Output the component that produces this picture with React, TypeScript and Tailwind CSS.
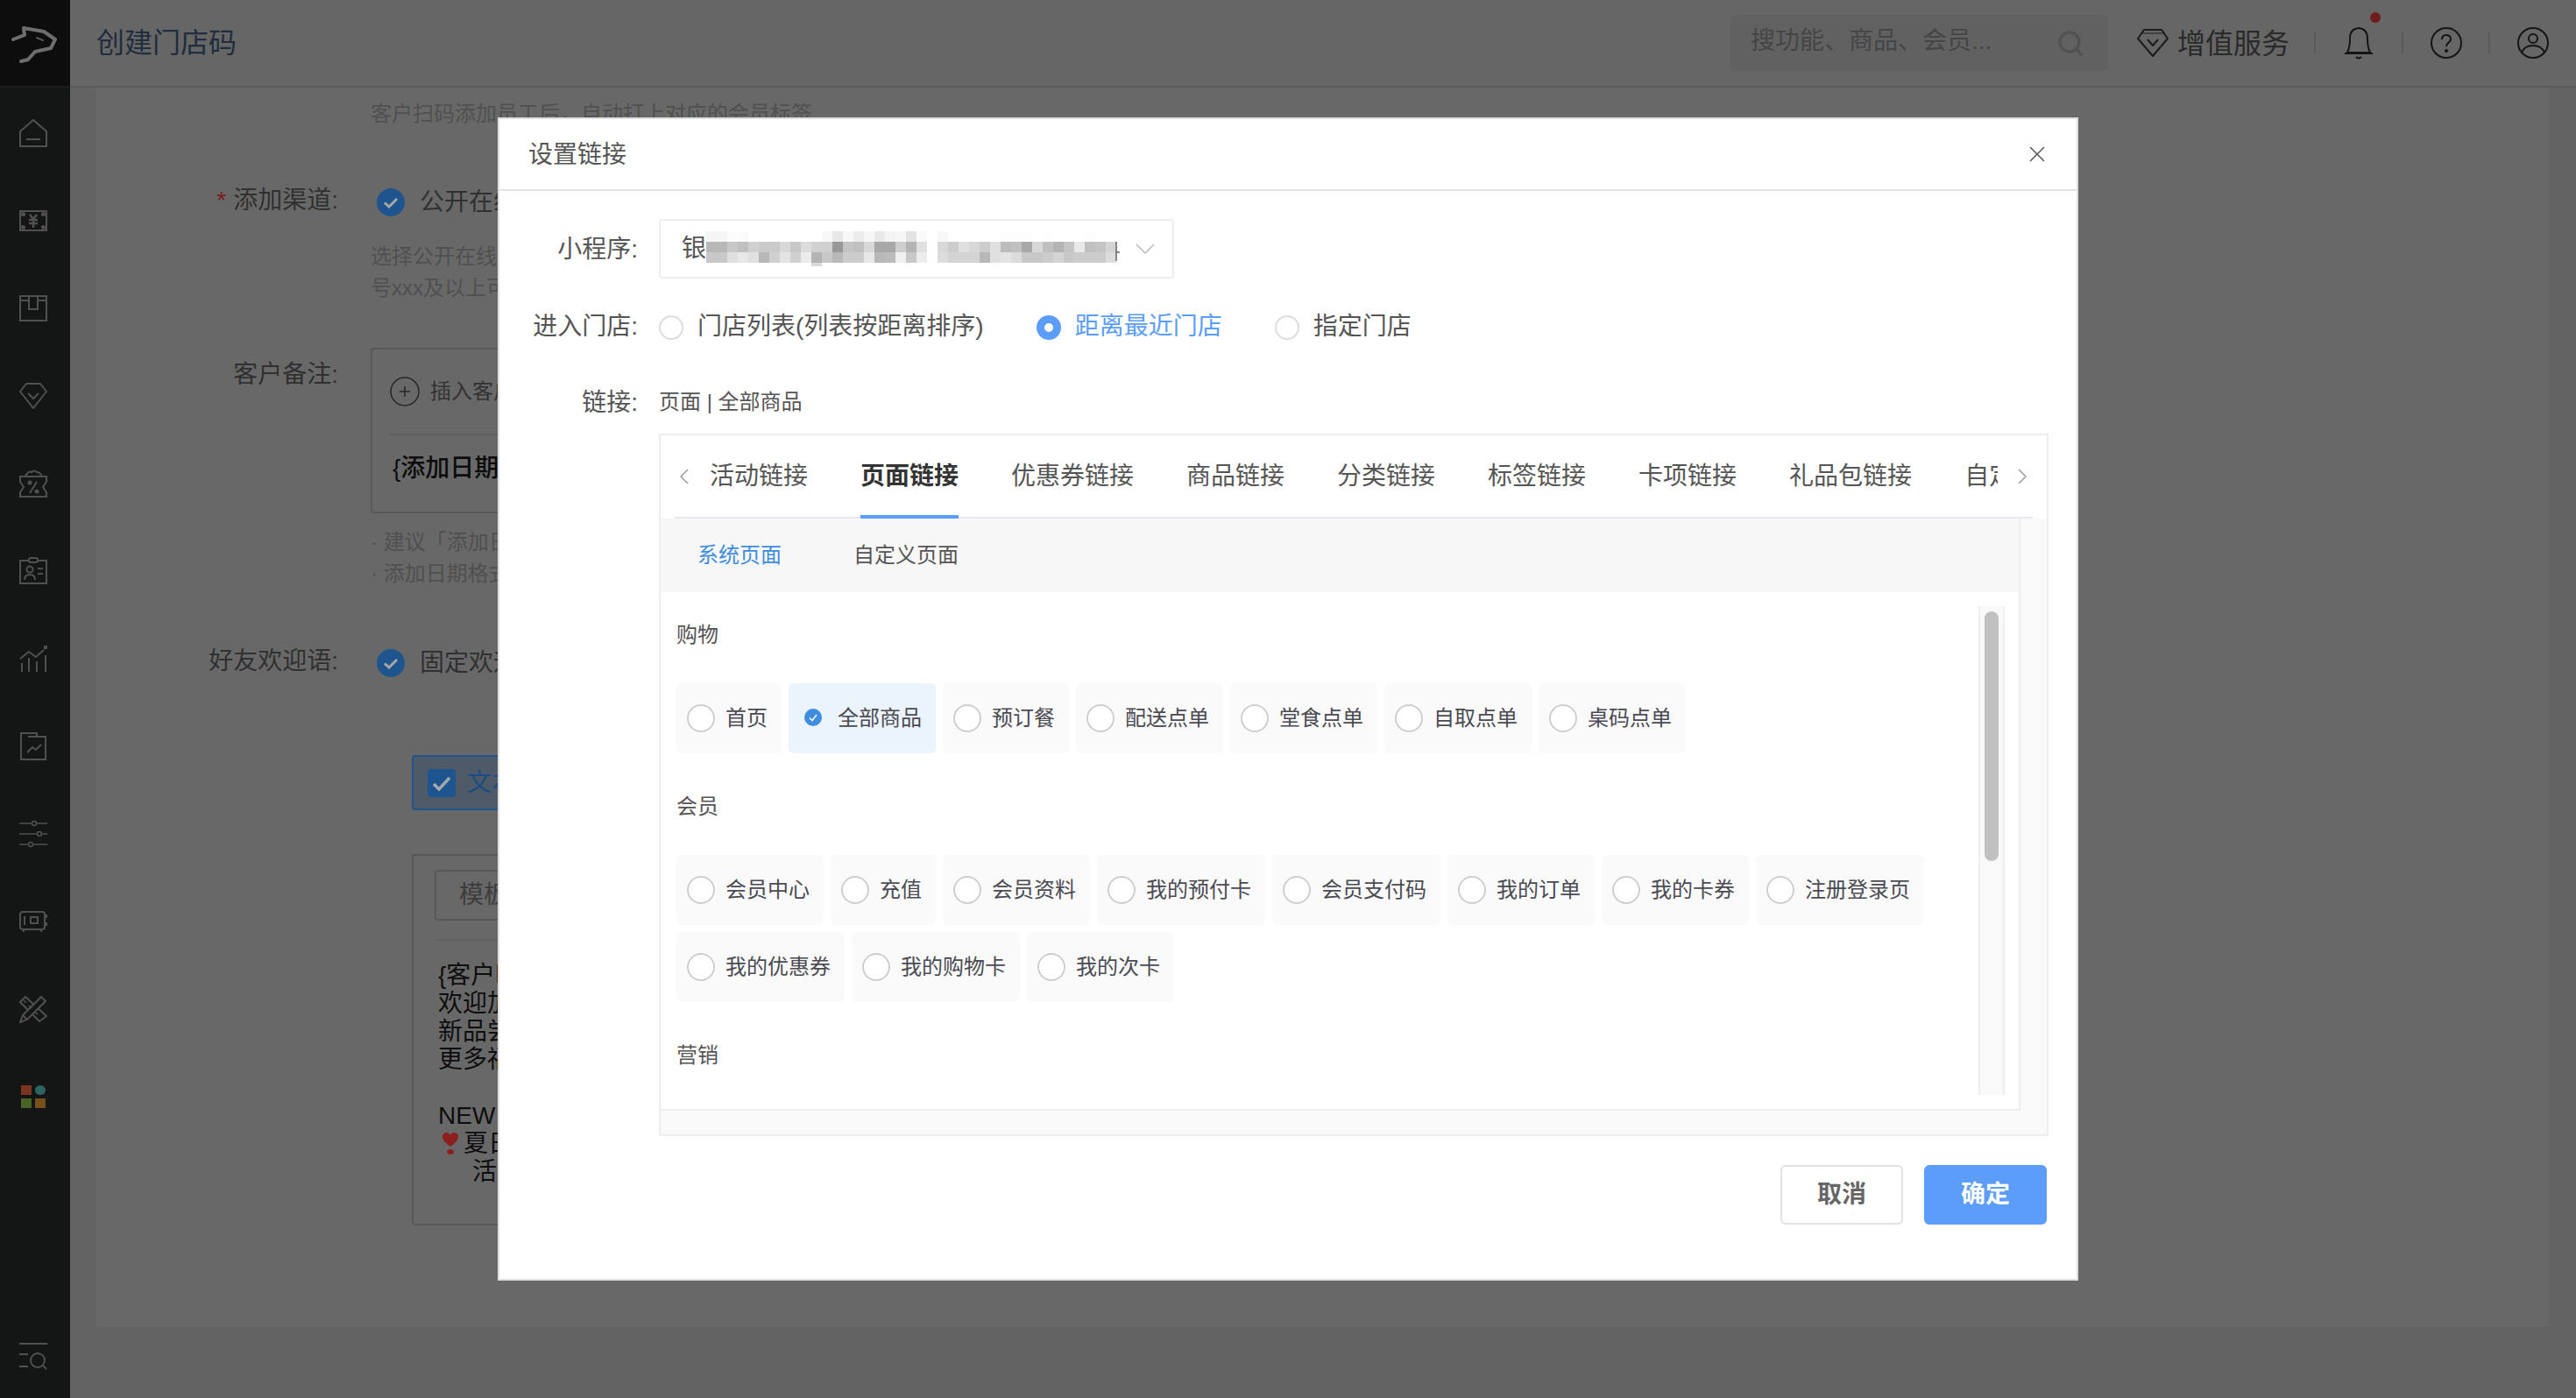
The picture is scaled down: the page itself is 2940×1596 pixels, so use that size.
import React from "react";

const ROW1 = [0xf5,0xf5,0xfc,0xfb,0xff,0xff,0xff,0xff,0xff,0xff,0xff,0xf8,0xe8,0xf8,0xec,0xf6,0xe8,0xf4,0xf6,0xe2,0xfa,0xff,0xf8,0xff,0xff,0xff,0xff,0xff,0xfd,0xfd,0xfd,0xff,0xfd,0xff,0xff,0xff,0xfd,0xff,0xff];
const ROW2 = [0xb8,0xb8,0xc8,0xc0,0xd0,0xca,0xca,0xd8,0xc8,0xdc,0xd0,0xd0,0x98,0xc4,0xc0,0xd8,0xa8,0xa8,0xce,0xb4,0xe0,0xff,0xd8,0xcc,0xe0,0xd8,0xcc,0xe0,0xbc,0xc0,0xa8,0xd8,0xc0,0xb4,0xc4,0xe8,0xc0,0xc4,0xd4];
const ROW3 = [0xc8,0xc8,0xe0,0xe8,0xe0,0xb8,0xd0,0xe4,0xd0,0xec,0xb4,0xc8,0xb8,0xcc,0xcc,0xe8,0xb8,0xbc,0xf0,0xc8,0xec,0xff,0xdc,0xd4,0xd4,0xd4,0xb8,0xe0,0xe4,0xdc,0xc8,0xc8,0xcc,0xd4,0xc8,0xcc,0xcc,0xcc,0xdc];

function Mosaic() {
  const rows = [ROW1, ROW2, ROW3];
  return (
    <svg width="476" height="40" viewBox="0 0 476 40" className="shrink-0">
      {rows.map((row, r) =>
        row.map((v, c) => (
          <rect key={`${r}-${c}`} x={c * 12} y={r * 12} width="12" height="12" fill={`rgb(${v},${v},${v})`} />
        ))
      )}
      <rect x="120" y="36" width="12" height="5" fill="#d8d8d8" />
      <path d="M468 12V34M468 24H472" stroke="#666" strokeWidth="1.5" fill="none" />
    </svg>
  );
}

const S = "#505050";
const icon = { fill: "none", stroke: S, strokeWidth: 2 } as const;
function NavIcon({ children }: { children: React.ReactNode }) {
  return (
    <div className="flex h-[100px] items-center justify-center pr-1">
      <svg width="32" height="32" viewBox="0 0 32 32" {...icon}>{children}</svg>
    </div>
  );
}

function Radio({ checked, label }: { checked?: boolean; label: string }) {
  return (
    <div className="flex items-center">
      {checked ? (
        <span className="flex h-7 w-7 items-center justify-center rounded-full bg-[#5c9dfa]">
          <span className="h-2.5 w-2.5 rounded-full bg-white" />
        </span>
      ) : (
        <span className="h-7 w-7 rounded-full border-2 border-[#dcdce2]" />
      )}
      <span className={`ml-[16px] pb-[3px] text-[28px] leading-[40px] ${checked ? "text-[#5c9dfa]" : "text-[#555]"}`}>{label}</span>
    </div>
  );
}

function Chip({ label, checked }: { label: string; checked?: boolean }) {
  return (
    <div className={`flex h-20 items-center gap-3 rounded-md pl-3 pr-4 ${checked ? "bg-[#ebf3fc]" : "bg-[#fafafa]"}`}>
      {checked ? (
        <span className="flex h-8 w-8 items-center justify-center">
          <svg width="20" height="20" viewBox="0 0 20 20" className="-mt-[3px]">
            <circle cx="10" cy="10" r="10" fill="#3f8de0" />
            <path d="M6 10.5L9 13.5L14 7" fill="none" stroke="#fff" strokeWidth="1.5" />
          </svg>
        </span>
      ) : (
        <span className="h-8 w-8 rounded-full border-2 border-[#cfcfcf] bg-white" />
      )}
      <span className="text-[24px] leading-[34px] text-[#4a4a52]">{label}</span>
    </div>
  );
}

function CheckCircle() {
  return (
    <svg width="32" height="32" viewBox="0 0 32 32" className="shrink-0">
      <circle cx="16" cy="16" r="16" fill="#1f558f" />
      <path d="M9 16.5L14 21L23 12" fill="none" stroke="#a8a8a8" strokeWidth="3" />
    </svg>
  );
}

const shop = ["首页", "全部商品", "预订餐", "配送点单", "堂食点单", "自取点单", "桌码点单"];
const member = ["会员中心", "充值", "会员资料", "我的预付卡", "会员支付码", "我的订单", "我的卡券", "注册登录页", "我的优惠券", "我的购物卡", "我的次卡"];
const tabs = ["活动链接", "页面链接", "优惠券链接", "商品链接", "分类链接", "标签链接", "卡项链接", "礼品包链接", "自定义链接"];

export default function App() {
  return (
    <div className="relative flex h-[1596px] w-[2940px] overflow-hidden bg-[#636363] font-['Liberation_Sans','Noto_Sans_CJK_SC',sans-serif]">
      {/* Sidebar */}
      <aside className="flex w-20 shrink-0 flex-col bg-[#141616]">
        <div className="flex h-[100px] items-center justify-center border-b-2 border-[#1c1c1c] bg-[#0d0d0d]">
          <svg width="80" height="98" viewBox="0 0 80 98" fill="none" stroke="#6e6e6e" strokeWidth="4" strokeLinejoin="round" strokeLinecap="round">
            <path d="M15 45L28 40L27 32L50 36L63 45L58 55L40 59L32 68L24 70" />
            <path d="M42 43L49 46" stroke="#555" strokeWidth="2" />
          </svg>
        </div>
        <div className="flex flex-1 flex-col pt-[2px]">
          <NavIcon><path d="M1 31V14L16 1L31 14V31Z" /><path d="M8 23H24" /></NavIcon>
          <NavIcon>
            <path d="M1 5H31V27H1Z" />
            <circle cx="4.5" cy="8.5" r="1.5" fill={S} /><circle cx="27.5" cy="8.5" r="1.5" fill={S} /><circle cx="4.5" cy="23.5" r="1.5" fill={S} /><circle cx="27.5" cy="23.5" r="1.5" fill={S} />
            <path d="M12 9L16 14L20 9M11 15H21M11 19H21M16 14V24" strokeWidth="2.5" />
          </NavIcon>
          <NavIcon><path d="M1 2H31V30H1Z" /><path d="M1 7H11M21 7H31M11 2V17H21V2" /></NavIcon>
          <NavIcon><path d="M8 2H24L31 11L16 30L1 11Z" strokeLinejoin="round" /><path d="M10 13L16 19L22 13" /></NavIcon>
          <NavIcon>
            <path d="M1 8H31V14L27 20L31 26V31H1V26L5 20L1 14Z" />
            <path d="M20 14L12 27" />
            <circle cx="12" cy="15" r="1.5" fill={S} /><circle cx="20" cy="25" r="1.5" fill={S} />
            <path d="M7 8Q10 1 14 3Q17 0 20 3Q24 3 26 8" />
          </NavIcon>
          <NavIcon>
            <path d="M1 4H31V30H1Z" />
            <rect x="11" y="1" width="10" height="5" rx="2" fill="#141616" />
            <circle cx="12" cy="14" r="3.5" />
            <path d="M6 26Q6 20 12 20Q18 20 18 26M21 13H27M21 19H27" />
          </NavIcon>
          <NavIcon>
            <path d="M3 31V21M11 31V15M20 31V19M30 31V12" />
            <path d="M1 16L11 8L19 14L28 6" />
            <rect x="28" y="1" width="4" height="4" fill={S} stroke="none" />
          </NavIcon>
          <NavIcon><path d="M2 1H20V5H30V31H2Z" /><path d="M10 5H20" /><path d="M9 23L15 17L19 20L25 14" /></NavIcon>
          <NavIcon>
            <path d="M0 4H32M0 16H32M0 28H32" strokeWidth="1.5" />
            <circle cx="17" cy="4" r="2.5" fill="#141616" strokeWidth="1.5" /><circle cx="23" cy="16" r="2.5" fill="#141616" strokeWidth="1.5" /><circle cx="13" cy="28" r="2.5" fill="#141616" strokeWidth="1.5" />
          </NavIcon>
          <NavIcon>
            <rect x="1" y="5" width="28" height="20" rx="3" />
            <path d="M31 8V12M31 17V21M6 10V20" />
            <rect x="13" y="11" width="8" height="7" />
            <path d="M5 25V28M25 25V28" />
          </NavIcon>
          <NavIcon>
            <path d="M7 2L1 8L23 30L31 24Z" />
            <path d="M25 2L30 7L9 28L1 31L4 23Z" fill="#141616" />
            <path d="M4 23L9 28" />
            <path d="M5 6L8 9M11 12L14 15M18 19L21 22" strokeWidth="1.5" />
          </NavIcon>
          <div className="flex h-[100px] items-center justify-center pr-1">
            <svg width="32" height="32" viewBox="0 0 32 32">
              <rect x="2" y="3" width="12" height="11" fill="#7a3520" />
              <ellipse cx="24" cy="8.5" rx="6" ry="5.5" fill="#2e6560" />
              <rect x="2" y="18" width="12" height="11" fill="#4a6427" />
              <rect x="18" y="18" width="12" height="11" fill="#77501c" />
            </svg>
          </div>
          <div className="mt-auto flex h-[94px] items-center justify-center pr-1">
            <svg width="32" height="32" viewBox="0 0 32 32" {...icon}>
              <path d="M0 1H32M0 13H10M0 27H10" />
              <circle cx="21" cy="20" r="8" />
              <path d="M27 26L31 30" />
            </svg>
          </div>
        </div>
      </aside>

      {/* Main */}
      <main className="flex flex-1 flex-col">
        <header className="flex h-[100px] shrink-0 items-center border-b-2 border-[#5c5c5c] bg-[#666666] pl-[30px]">
          <h1 className="text-[32px] font-normal leading-[44px] text-[#1f2d3c]">创建门店码</h1>
          <div className="ml-auto flex h-16 w-[432px] items-center justify-between rounded-md bg-[#616161] pl-6 pr-[28px]">
            <span className="-mt-1 text-[28px] text-[#454545]">搜功能、商品、会员...</span>
            <svg width="30" height="30" viewBox="0 0 30 30" fill="none" stroke="#525252" strokeWidth="3.5">
              <circle cx="14" cy="14" r="11" /><path d="M22 22L28 29" />
            </svg>
          </div>
          <svg width="36" height="32" viewBox="0 0 36 32" fill="none" stroke="#1c1c1c" strokeWidth="2" strokeLinejoin="round" className="ml-[33px]">
            <path d="M8 1H28L35 11L18 31L1 11Z" /><path d="M4 5H32" strokeWidth="1" /><path d="M12 12L18 19L24 12" />
          </svg>
          <span className="ml-[10px] pt-[2px] text-[32px] leading-[44px] text-[#2a2a2a]">增值服务</span>
          <div className="ml-7 flex h-[100px] w-[299px] items-center">
            <span className="h-6 w-0.5 bg-[#5a5a5a]" />
            <div className="relative flex flex-1 justify-center">
              <svg width="34" height="38" viewBox="0 0 34 38" fill="none" stroke="#151515" strokeWidth="2">
                <path d="M4 30Q7 24 7 14Q7 3 17 2Q27 3 27 14Q27 24 30 30Z" /><path d="M1 31H33" /><path d="M14 35Q17 38 20 35" />
              </svg>
              <span className="absolute left-[62px] top-[-16px] h-[12px] w-[12px] rounded-full bg-[#6f1c1c]" />
            </div>
            <span className="h-6 w-0.5 bg-[#5a5a5a]" />
            <div className="flex flex-1 justify-center">
              <svg width="36" height="36" viewBox="0 0 36 36" fill="none" stroke="#151515" strokeWidth="2">
                <circle cx="18" cy="18" r="17" /><path d="M13 14Q13 9 18 9Q23 9 23 13.5Q23 16 20 18Q18 19.5 18 22" /><circle cx="18" cy="27" r="1" fill="#151515" />
              </svg>
            </div>
            <span className="h-6 w-0.5 bg-[#5a5a5a]" />
            <div className="flex flex-1 justify-center">
              <svg width="36" height="36" viewBox="0 0 36 36" fill="none" stroke="#151515" strokeWidth="2">
                <circle cx="18" cy="18" r="17" /><circle cx="18" cy="13" r="5" /><path d="M5 29Q8 21 18 21Q28 21 31 29" />
              </svg>
            </div>
          </div>
        </header>

        <div className="flex-1 pb-[81px] pl-[30px] pr-[31px]">
          <section className="h-full overflow-hidden bg-[#686868] pt-3 text-[24px] leading-[36px] text-[#505050]">
            <p className="ml-[313px]">客户扫码添加员工后，自动打上对应的会员标签</p>

            <div className="mt-[63px] flex h-10 items-center">
              <label className="w-[276px] pb-[5px] text-right text-[28px] text-[#303030]"><span className="mr-2 text-[#7a1c1c]">*</span>添加渠道:</label>
              <span className="ml-[44px]"><CheckCircle /></span>
              <span className="ml-[17px] text-[28px] text-[#303030]">公开在线</span>
            </div>
            <p className="ml-[313px] mt-6">选择公开在线</p>
            <p className="ml-[313px]">号xxx及以上可</p>

            <div className="mt-[50px] flex items-start">
              <label className="w-[276px] pt-[13px] text-right text-[28px] text-[#303030]">客户备注:</label>
              <div className="ml-[37px] h-[189px] w-[600px] rounded border-2 border-[#585858] pl-5">
                <div className="flex h-[98px] items-center border-b-2 border-[#606060]">
                  <svg width="34" height="34" viewBox="0 0 34 34" fill="none" stroke="#262626" strokeWidth="1.5"><circle cx="17" cy="17" r="16" /><path d="M11 17H23M17 11V23" /></svg>
                  <span className="ml-3 text-[#333]">插入客户昵称</span>
                </div>
                <p className="ml-[3px] mt-5 text-[28px] font-medium text-[#0c0c0c]">{"{添加日期}"}</p>
              </div>
            </div>
            <p className="ml-[313px] mt-[15px]">· 建议「添加日期」</p>
            <p className="ml-[313px]">· 添加日期格式</p>

            <div className="mt-16 flex h-10 items-center">
              <label className="w-[276px] pb-[5px] text-right text-[28px] text-[#303030]">好友欢迎语:</label>
              <span className="ml-[44px]"><CheckCircle /></span>
              <span className="ml-[17px] text-[28px] text-[#303030]">固定欢迎语</span>
            </div>

            <div className="ml-[360px] mt-[85px] flex h-[63px] w-[300px] items-center rounded border-2 border-[#1f558f] bg-[#4e5a68] pl-4">
              <svg width="32" height="32" viewBox="0 0 32 32"><rect width="32" height="32" rx="4" fill="#1c5590" /><path d="M7 17L13 23L25 10" fill="none" stroke="#a8a8a8" strokeWidth="3.5" /></svg>
              <span className="ml-[13px] text-[28px] text-[#1a4b82]">文本</span>
            </div>

            <div className="ml-[360px] mt-[50px] h-[424px] w-[700px] rounded border-2 border-[#585858] px-6 pt-4 text-[28px] leading-[32px] text-[#0e0e0e]">
              <div className="flex h-[58px] w-[240px] items-center rounded border-2 border-[#585858] pl-[26px] text-[#3c3c3c]">模板</div>
              <div className="mt-[21px] border-t-2 border-[#606060] pl-1 pt-[24px]">
                <p>{"{客户昵称}"}</p>
                <p>欢迎加入</p>
                <p>新品尝鲜</p>
                <p>更多福利</p>
                <p className="mt-8">NEW</p>
                <p className="flex items-center pl-[5px]">
                  <svg width="18" height="26" viewBox="0 0 18 26" className="shrink-0"><path d="M9 16C4 12 0 9 0 5C0 2 2 0 4.5 0C6.500 0 8 1 9 3C10 1 11.500 0 13.500 0C16 0 18 2 18 5C18 9 14 12 9 16Z" fill="#8e1f1f" /><ellipse cx="9" cy="22" rx="4" ry="3" fill="#8e1f1f" /></svg>
                  <span className="ml-[6px]">夏日活动</span>
                </p>
                <p className="pl-[39px]">活动</p>
              </div>
            </div>
          </section>
        </div>
      </main>

      {/* Modal */}
      <div className="absolute inset-0 flex items-center justify-center">
        <div className="h-[1328px] w-[1804px] border-2 border-[#dedede] bg-white text-[#555]">
          <div className="flex h-[82px] items-center justify-between border-b-2 border-[#e4e4e4] pl-[33px] pr-[36px]">
            <span className="pt-[2px] text-[28px] leading-[40px]">设置链接</span>
            <svg width="18" height="18" viewBox="0 0 18 18" fill="none" stroke="#555" strokeWidth="1.5"><path d="M1 1L17 17M17 1L1 17" /></svg>
          </div>

          <div className="mt-8 flex items-center">
            <label className="w-[158px] pt-px text-right text-[28px] text-[#555]">小程序:</label>
            <div className="ml-6 flex h-[68px] w-[588px] items-center rounded border-2 border-[#eeeeee] pl-[24px]">
              <span className="text-[28px]">银</span>
              <Mosaic />
              <svg width="22" height="12" viewBox="0 0 22 12" fill="none" stroke="#bbb" strokeWidth="1.5" className="ml-[14px]"><path d="M1 1L11 11L21 1" /></svg>
            </div>
          </div>

          <div className="mt-9 flex h-10 items-center">
            <label className="w-[158px] pb-[2px] text-right text-[28px]">进入门店:</label>
            <div className="ml-6"><Radio label="门店列表(列表按距离排序)" /></div>
            <div className="ml-[60px]"><Radio checked label="距离最近门店" /></div>
            <div className="ml-[60px]"><Radio label="指定门店" /></div>
          </div>

          <div className="mt-12 flex h-[34px] items-center">
            <label className="w-[158px] pt-[2px] text-right text-[28px]">链接:</label>
            <span className="ml-6 text-[24px]">页面 | 全部商品</span>
          </div>

          <div className="ml-[182px] mt-[19px] h-[802px] w-[1586px] border-2 border-[#eeeeee] bg-[#f9f9f9]">
            <div className="bg-white">
              <div className="mx-4 flex h-[95px] items-start border-b-2 border-[#e8e8ee]">
                <svg width="10" height="18" viewBox="0 0 10 18" fill="none" stroke="#999" strokeWidth="1.5" className="ml-[6px] mt-[38px] shrink-0"><path d="M9 1L1 9L9 17" /></svg>
                <div className="ml-6 flex h-[95px] w-[1470px] shrink-0 gap-[60px] overflow-hidden">
                  {tabs.map((t) => (
                    <div key={t} className={`flex h-[95px] shrink-0 items-center whitespace-nowrap border-b-4 pt-[3px] text-[28px] ${t === "页面链接" ? "border-[#5c9dfa] font-semibold text-[#333]" : "border-transparent text-[#555]"}`}>{t}</div>
                  ))}
                </div>
                <svg width="10" height="18" viewBox="0 0 10 18" fill="none" stroke="#999" strokeWidth="1.5" className="ml-[23px] mt-[38px] shrink-0"><path d="M1 1L9 9L1 17" /></svg>
              </div>
            </div>

            <div className="h-[676px] w-[1552px] border-b-2 border-r-2 border-[#eeeeee] bg-white">
              <div className="flex h-[84px] items-center gap-[82px] bg-[#f7f7f7] pl-[42px] text-[24px]">
                <span className="text-[#3f8de0]">系统页面</span>
                <span className="text-[#555]">自定义页面</span>
              </div>
              <div className="flex h-[590px] pl-[18px] pr-4 pt-4">
                <div className="h-[558px] flex-1 overflow-hidden pt-4">
                  <div className="h-[34px] text-[24px] leading-[34px]">购物</div>
                  <div className="mt-[38px] flex flex-wrap gap-2">
                    {shop.map((s) => <Chip key={s} label={s} checked={s === "全部商品"} />)}
                  </div>
                  <div className="mt-[44px] h-[34px] text-[24px] leading-[34px]">会员</div>
                  <div className="mt-[38px] flex flex-wrap gap-2">
                    {member.map((s) => <Chip key={s} label={s} />)}
                  </div>
                  <div className="mt-[44px] h-[34px] text-[24px] leading-[34px]">营销</div>
                </div>
                <div className="h-[558px] w-[30px] border-x-2 border-[#eeeeee] bg-[#f9f9f9]">
                  <div className="mx-auto mt-[6px] h-[285px] w-4 rounded-full bg-[#c1c1c1]" />
                </div>
              </div>
            </div>
          </div>

          <div className="ml-[182px] mt-[33px] flex w-[1584px] justify-end gap-6">
            <button className="h-[68px] w-[140px] rounded-md border-2 border-[#e0e0e6] bg-white text-[28px] font-semibold text-[#666]">取消</button>
            <button className="h-[68px] w-[140px] rounded-md bg-[#5c9dfa] text-[28px] font-semibold text-white">确定</button>
          </div>
        </div>
      </div>
    </div>
  );
}
